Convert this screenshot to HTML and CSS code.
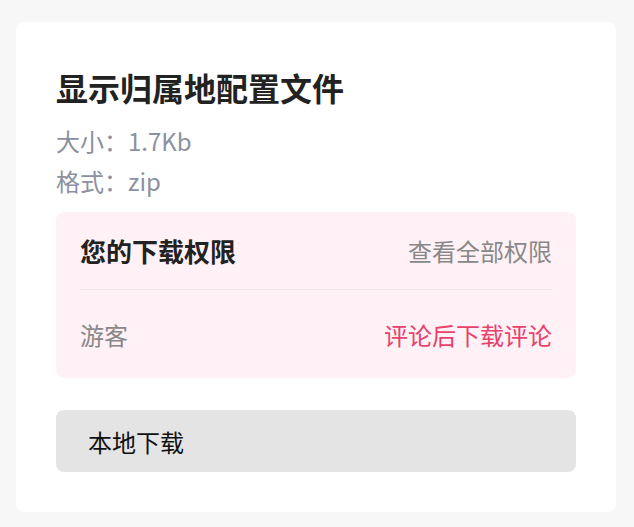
FILE: index.html
```html
<!DOCTYPE html>
<html lang="zh-CN">
<head>
    <meta charset="UTF-8">
    <meta name="viewport" content="width=device-width, initial-scale=1.0">
    <title>显示归属地配置文件</title>
    <link rel="stylesheet" href="styles.css">
</head>
<body>

<div class="card">
    <h1 class="file-title">显示归属地配置文件</h1>
    <div class="file-meta">
        <p>大小：1.7Kb</p>
        <p>格式：zip</p>
    </div>

    <!-- Permission box -->
    <div class="perm">
        <div class="perm-row perm-head">
            <span class="perm-title">您的下载权限</span>
            <a class="perm-all" href="#">查看全部权限</a>
        </div>
        <div class="perm-row">
            <span class="perm-role">游客</span>
            <a class="perm-action" href="#">评论后下载评论</a>
        </div>
    </div>

    <button class="download">本地下载</button>
</div>

</body>
</html>
```

FILE: styles.css
```css
body {
    margin: 0;
    padding: 22px 0 0 16px;
    background-color: #f7f7f7;
    font-family: "Noto Sans CJK SC", "Noto Sans", sans-serif;
}
.card {
    width: 600px;
    box-sizing: border-box;
    padding: 41px 40px 40px;
    background-color: #fff;
    border-radius: 8px;
}
.file-title {
    margin: 0 0 10px;
    font-size: 32px;
    line-height: 48px;
    font-weight: 700;
    color: #222;
}
.file-meta p {
    margin: 0;
    font-size: 24px;
    line-height: 40px;
    color: #8c91a1;
}
.perm {
    margin-top: 11px;
    padding: 0 24px;
    background-color: #fff1f5;
    border-radius: 8px;
}
.perm-row {
    display: flex;
    justify-content: space-between;
    align-items: center;
    height: 88px;
    font-size: 24px;
}
.perm-head {
    height: 77px;
    border-bottom: 1px solid #f6e4ea;
}
.perm-title {
    font-size: 26px;
    font-weight: 700;
    color: #222;
}
.perm-all, .perm-role {
    color: #888;
    text-decoration: none;
}
.perm-action {
    color: #e8416c;
    text-decoration: none;
}
.download {
    display: block;
    width: 100%;
    height: 62px;
    margin-top: 32px;
    padding: 0 32px;
    border: none;
    border-radius: 8px;
    background-color: #e4e4e4;
    color: #111;
    font-family: inherit;
    font-size: 24px;
    text-align: left;
    cursor: pointer;
}
```
